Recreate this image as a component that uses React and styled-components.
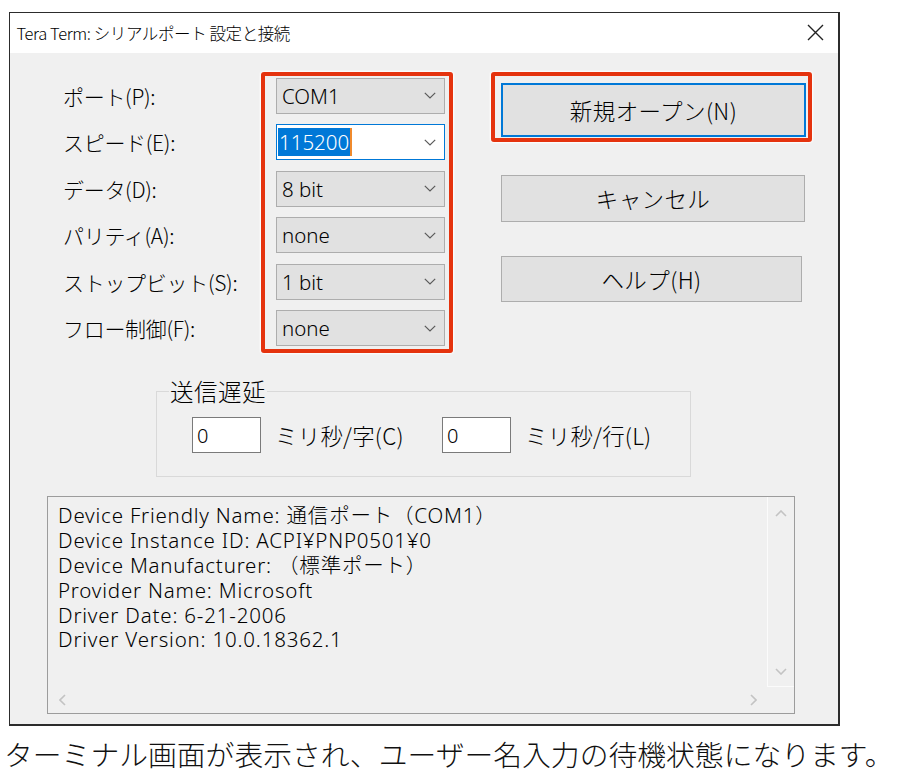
import React from 'react';
import styled, { createGlobalStyle } from 'styled-components';

const Global = createGlobalStyle`
  html, body { margin: 0; padding: 0; background: #fff; }
  body {
    font-family: "Noto Sans", "Noto Sans CJK JP", sans-serif;
    font-weight: 300;
    color: #000;
  }
`;

const Page = styled.div`
  width: 898px;
  height: 778px;
  padding-top: 12px;
  box-sizing: border-box;
  display: flex;
  flex-direction: column;
  overflow: hidden;
`;

const Window = styled.div`
  margin-left: 9px;
  width: 831px;
  height: 714px;
  box-sizing: border-box;
  border: 2px solid #2c2c2c;
  border-left-width: 1.5px;
  border-top-width: 1.5px;
  background: #f0f0f0;
  display: flex;
  flex-direction: column;
`;

const TitleBar = styled.div`
  height: 39.5px;
  background: #fff;
  display: flex;
  align-items: center;
  justify-content: space-between;
  padding: 0 14px 0 6.5px;
  font-family: "Noto Sans CJK JP", sans-serif;
  font-size: 16.5px;
  letter-spacing: -0.4px;
`;

const CloseIcon = () => (
  <svg width="17" height="17" viewBox="0 0 17 17">
    <path d="M1 1 L16 16 M16 1 L1 16" stroke="#222" strokeWidth="1.4" fill="none" />
  </svg>
);

const Body = styled.div`
  flex: 1;
  display: flex;
  flex-direction: column;
  padding-top: 19px;
  font-family: "Noto Sans CJK JP", sans-serif;
  font-size: 22px;
`;

const FormRow = styled.div`
  display: flex;
  align-items: flex-start;
  padding-left: 53px;
`;

const LabelColumn = styled.div`
  width: 198px;
  display: grid;
  grid-auto-rows: 36px;
  row-gap: 10.6px;
  padding-top: 6px;
`;

const Label = styled.div`
  display: flex;
  align-items: center;
  font-size: 21px;
  letter-spacing: -0.3px;
  white-space: nowrap;
`;

const Highlight = styled.div`
  box-sizing: border-box;
  border: 4px solid #e5330e;
  border-radius: 3px;
  box-shadow: 0 0 2px 1px rgba(255, 255, 255, 0.95);
`;

const ComboStack = styled(Highlight)`
  width: 192px;
  padding: 2px 4px 3px 11px;
  display: grid;
  grid-auto-rows: 36px;
  row-gap: 10.6px;
`;

const Combo = styled.div`
  box-sizing: border-box;
  display: flex;
  align-items: center;
  justify-content: space-between;
  padding: 0 8px 0 ${p => (p.$focused ? '1px' : '5px')};
  background: ${p => (p.$focused ? '#fff' : '#e1e1e1')};
  border: ${p => (p.$focused ? '1.5px solid #0078d7' : '1px solid #adadad')};
  font-family: "Noto Sans", sans-serif;
  font-size: 20.5px;
`;

const Selected = styled.span`
  display: inline-flex;
  align-items: center;
  height: 28px;
  padding: 0 1px;
  background: #0078d7;
  color: #fff;
  border-right: 2px solid #f08a2c;
`;

const Chevron = () => (
  <svg width="12" height="7" viewBox="0 0 12 7">
    <path d="M0.8 0.8 L6 6 L11.2 0.8" stroke="#5a5a5a" strokeWidth="1.2" fill="none" />
  </svg>
);

const ButtonColumn = styled.div`
  margin-left: 38px;
  display: flex;
  flex-direction: column;
  align-items: flex-start;
`;

const DefaultWrap = styled(Highlight)`
  width: 321px;
  height: 70px;
  padding: 7px 2px 1px 6px;
  display: flex;
`;

const Button = styled.div`
  box-sizing: border-box;
  width: ${p => p.$w}px;
  height: ${p => p.$h}px;
  margin: ${p => p.$m || '0'};
  display: flex;
  align-items: center;
  justify-content: center;
  background: #e1e1e1;
  border: ${p => (p.$default ? '2px solid #0078d7' : '1px solid #adadad')};
  font-size: 22.5px;
  letter-spacing: 0.4px;
`;

const GroupBox = styled.fieldset`
  margin: 26px 0 0 146px;
  width: 535px;
  box-sizing: border-box;
  border: 1px solid #d9d9d9;
  padding: 0 0 23px 12px;
  min-width: 0;
`;

const Legend = styled.legend`
  padding: 0 1px;
  font-size: 23.5px;
  line-height: 24px;
  letter-spacing: 0.5px;
`;

const DelayRow = styled.div`
  margin: 14px 0 0 23px;
  display: grid;
  grid-template-columns: 69px 181px 69px auto;
  align-items: center;
`;

const NumberBox = styled.div`
  box-sizing: border-box;
  height: 36px;
  background: #fff;
  border: 1px solid #7a7a7a;
  display: flex;
  align-items: center;
  padding-left: 4px;
  font-family: "Noto Sans", sans-serif;
  font-size: 20px;
`;

const Unit = styled.div`
  padding-left: 14px;
  font-size: 22.5px;
  letter-spacing: 0.2px;
  white-space: nowrap;
`;

const InfoBox = styled.div`
  margin: 19px 0 0 37px;
  width: 748px;
  height: 218px;
  box-sizing: border-box;
  border: 1px solid #9c9c9c;
  display: grid;
  grid-template-columns: 1fr 27px;
  grid-template-rows: 1fr 26px;
`;

const InfoText = styled.div`
  padding: 6px 0 0 10px;
  font-family: "Noto Sans", "Noto Sans CJK JP", sans-serif;
  font-size: 20.5px;
  line-height: 24.8px;
  letter-spacing: 0.8px;
  white-space: nowrap;
  overflow: hidden;
`;

const InfoLine = styled.div`
  height: 24.8px;
`;

const VScroll = styled.div`
  border-left: 1px solid #fbfbfb;
  border-bottom: 1px solid #fbfbfb;
  display: flex;
  flex-direction: column;
  align-items: center;
  justify-content: space-between;
  padding: 13px 0 11px;
`;

const HScroll = styled.div`
  display: flex;
  align-items: center;
  justify-content: space-between;
  padding: 0 10px 0 11px;
`;

const Corner = styled.div``;

const Arrow = ({ dir }) => {
  const paths = {
    up: 'M1 6 L6 1 L11 6',
    down: 'M1 1 L6 6 L11 1',
    left: 'M6 1 L1 6 L6 11',
    right: 'M1 1 L6 6 L1 11',
  };
  const vertical = dir === 'up' || dir === 'down';
  return (
    <svg width={vertical ? 12 : 7} height={vertical ? 7 : 12} viewBox={vertical ? '0 0 12 7' : '0 0 7 12'}>
      <path d={paths[dir]} stroke="#c3c3c3" strokeWidth="1.6" fill="none" />
    </svg>
  );
};

const Caption = styled.div`
  margin-top: 8px;
  padding-left: 4px;
  font-family: "Noto Sans CJK JP", sans-serif;
  font-size: 28.8px;
  line-height: 40px;
  white-space: nowrap;
  color: #111;
`;

const fields = [
  { label: 'ポート(P):', value: 'COM1' },
  { label: 'スピード(E):', value: '115200', focused: true },
  { label: 'データ(D):', value: '8 bit' },
  { label: 'パリティ(A):', value: 'none' },
  { label: 'ストップビット(S):', value: '1 bit' },
  { label: 'フロー制御(F):', value: 'none' },
];

const infoLines = [
  'Device Friendly Name: 通信ポート（COM1）',
  'Device Instance ID: ACPI¥PNP0501¥0',
  'Device Manufacturer: （標準ポート）',
  'Provider Name: Microsoft',
  'Driver Date: 6-21-2006',
  'Driver Version: 10.0.18362.1',
];

export default function App() {
  return (
    <Page>
      <Global />
      <Window>
        <TitleBar>
          <span>Tera Term: シリアルポート 設定と接続</span>
          <CloseIcon />
        </TitleBar>
        <Body>
          <FormRow>
            <LabelColumn>
              {fields.map(f => (
                <Label key={f.label}>{f.label}</Label>
              ))}
            </LabelColumn>
            <ComboStack>
              {fields.map(f => (
                <Combo key={f.label} $focused={f.focused}>
                  {f.focused ? <Selected>{f.value}</Selected> : <span>{f.value}</span>}
                  <Chevron />
                </Combo>
              ))}
            </ComboStack>
            <ButtonColumn>
              <DefaultWrap>
                <Button $default $w={305} $h={54}>新規オープン(N)</Button>
              </DefaultWrap>
              <Button $w={304} $h={47} $m="33px 0 0 10px">キャンセル</Button>
              <Button $w={301} $h={46} $m="34px 0 0 10px">ヘルプ(H)</Button>
            </ButtonColumn>
          </FormRow>
          <GroupBox>
            <Legend>送信遅延</Legend>
            <DelayRow>
              <NumberBox>0</NumberBox>
              <Unit>ミリ秒/字(C)</Unit>
              <NumberBox>0</NumberBox>
              <Unit>ミリ秒/行(L)</Unit>
            </DelayRow>
          </GroupBox>
          <InfoBox>
            <InfoText>
              {infoLines.map(l => (
                <InfoLine key={l}>{l}</InfoLine>
              ))}
            </InfoText>
            <VScroll>
              <Arrow dir="up" />
              <Arrow dir="down" />
            </VScroll>
            <HScroll>
              <Arrow dir="left" />
              <Arrow dir="right" />
            </HScroll>
            <Corner />
          </InfoBox>
        </Body>
      </Window>
      <Caption>ターミナル画面が表示され、ユーザー名入力の待機状態になります。</Caption>
    </Page>
  );
}
